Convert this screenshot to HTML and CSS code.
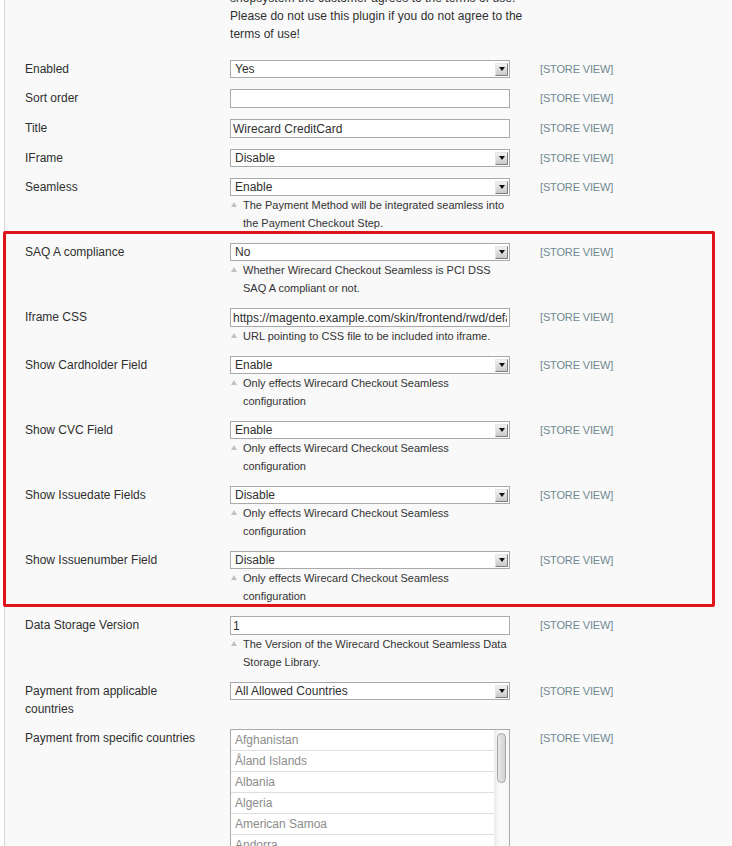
FILE: index.html
```html
<!DOCTYPE html>
<html>
<head>
<meta charset="utf-8">
<link rel="stylesheet" href="styles.css">
</head>
<body>
<div class="panel">
  <div class="row row-comment">
    <div class="label"></div>
    <div class="value"><p class="comment">shopsystem the customer agrees to the terms of use.<br>Please do not use this plugin if you do not agree to the<br>terms of use!</p></div>
    <div class="scope"></div>
  </div>

  <div class="row">
    <div class="label">Enabled</div>
    <div class="value"><div class="select"><span>Yes</span><span class="select-btn"></span></div></div>
    <div class="scope">[STORE VIEW]</div>
  </div>

  <div class="row">
    <div class="label">Sort order</div>
    <div class="value"><input class="input" type="text" value=""></div>
    <div class="scope">[STORE VIEW]</div>
  </div>

  <div class="row">
    <div class="label">Title</div>
    <div class="value"><input class="input" type="text" value="Wirecard CreditCard"></div>
    <div class="scope">[STORE VIEW]</div>
  </div>

  <div class="row">
    <div class="label">IFrame</div>
    <div class="value"><div class="select"><span>Disable</span><span class="select-btn"></span></div></div>
    <div class="scope">[STORE VIEW]</div>
  </div>

  <div class="row">
    <div class="label">Seamless</div>
    <div class="value">
      <div class="select"><span>Enable</span><span class="select-btn"></span></div>
      <p class="note"><span>The Payment Method will be integrated seamless into the Payment Checkout Step.</span></p>
    </div>
    <div class="scope">[STORE VIEW]</div>
  </div>

  <div class="row">
    <div class="label">SAQ A compliance</div>
    <div class="value">
      <div class="select"><span>No</span><span class="select-btn"></span></div>
      <p class="note"><span>Whether Wirecard Checkout Seamless is PCI DSS SAQ A compliant or not.</span></p>
    </div>
    <div class="scope">[STORE VIEW]</div>
  </div>

  <div class="row">
    <div class="label">Iframe CSS</div>
    <div class="value">
      <input class="input" type="text" value="https://magento.example.com/skin/frontend/rwd/default/css/wirecard.css">
      <p class="note"><span>URL pointing to CSS file to be included into iframe.</span></p>
    </div>
    <div class="scope">[STORE VIEW]</div>
  </div>

  <div class="row">
    <div class="label">Show Cardholder Field</div>
    <div class="value">
      <div class="select"><span>Enable</span><span class="select-btn"></span></div>
      <p class="note"><span>Only effects Wirecard Checkout Seamless configuration</span></p>
    </div>
    <div class="scope">[STORE VIEW]</div>
  </div>

  <div class="row">
    <div class="label">Show CVC Field</div>
    <div class="value">
      <div class="select"><span>Enable</span><span class="select-btn"></span></div>
      <p class="note"><span>Only effects Wirecard Checkout Seamless configuration</span></p>
    </div>
    <div class="scope">[STORE VIEW]</div>
  </div>

  <div class="row">
    <div class="label">Show Issuedate Fields</div>
    <div class="value">
      <div class="select"><span>Disable</span><span class="select-btn"></span></div>
      <p class="note"><span>Only effects Wirecard Checkout Seamless configuration</span></p>
    </div>
    <div class="scope">[STORE VIEW]</div>
  </div>

  <div class="row">
    <div class="label">Show Issuenumber Field</div>
    <div class="value">
      <div class="select"><span>Disable</span><span class="select-btn"></span></div>
      <p class="note"><span>Only effects Wirecard Checkout Seamless configuration</span></p>
    </div>
    <div class="scope">[STORE VIEW]</div>
  </div>

  <div class="row">
    <div class="label">Data Storage Version</div>
    <div class="value">
      <input class="input" type="text" value="1">
      <p class="note"><span>The Version of the Wirecard Checkout Seamless Data Storage Library.</span></p>
    </div>
    <div class="scope">[STORE VIEW]</div>
  </div>

  <div class="row">
    <div class="label">Payment from applicable countries</div>
    <div class="value"><div class="select"><span>All Allowed Countries</span><span class="select-btn"></span></div></div>
    <div class="scope">[STORE VIEW]</div>
  </div>

  <div class="row">
    <div class="label">Payment from specific countries</div>
    <div class="value">
      <div class="multi">
        <div class="multi-list">
          <div class="opt">Afghanistan</div>
          <div class="opt">Åland Islands</div>
          <div class="opt">Albania</div>
          <div class="opt">Algeria</div>
          <div class="opt">American Samoa</div>
          <div class="opt">Andorra</div>
          <div class="opt">Angola</div>
        </div>
        <div class="multi-bar"><div class="multi-thumb"></div></div>
      </div>
    </div>
    <div class="scope">[STORE VIEW]</div>
  </div>
</div>
<div class="highlight"></div>
</body>
</html>
```

FILE: styles.css
```css
html, body {
  margin: 0;
  padding: 0;
}
body {
  background: #ffffff;
  font-family: "Liberation Sans", Arial, sans-serif;
  font-size: 12px;
  color: #2f2f2f;
  overflow: hidden;
  height: 846px;
}
.panel {
  margin-left: 4px;
  border-left: 1px solid #d6d6d6;
  background: #f9f9f9;
  padding-left: 20px;
  min-height: 900px;
}
.row {
  display: grid;
  grid-template-columns: 205px 280px 1fr;
  padding: 5px 0 6px;
  line-height: 18px;
}
.row-comment {
  margin-top: -16px;
  padding-bottom: 12px;
}
.label {
  padding-right: 25px;
}
.scope {
  padding-left: 30px;
  font-size: 11px;
  letter-spacing: -0.15px;
  color: #6f8992;
}
.comment {
  margin: 0;
  white-space: nowrap;
  line-height: 18px;
  letter-spacing: 0.05px;
}
.select {
  box-sizing: border-box;
  height: 18px;
  border: 1px solid #aaaaaa;
  background: #ffffff;
  display: flex;
  align-items: center;
  justify-content: space-between;
  padding: 0 1px 0 4px;
  line-height: 16px;
}
.select-btn {
  box-sizing: border-box;
  width: 13px;
  height: 13px;
  border: 1px solid;
  border-color: #e6e6e6 #7d7d7d #7d7d7d #e6e6e6;
  background: linear-gradient(#f2f2f2, #c9c9c9);
  display: flex;
  align-items: center;
  justify-content: center;
}
.select-btn::after {
  content: "";
  width: 0;
  height: 0;
  border-left: 3px solid transparent;
  border-right: 3px solid transparent;
  border-top: 4px solid #111111;
}
.input {
  display: block;
  box-sizing: border-box;
  width: 280px;
  height: 19px;
  margin: 0;
  border: 1px solid #aaaaaa;
  padding: 0 2px;
  background: #ffffff;
  font-family: "Liberation Sans", Arial, sans-serif;
  font-size: 12px;
  color: #2f2f2f;
  outline: none;
}
.note {
  display: flex;
  margin: 0;
  font-size: 11px;
  line-height: 18px;
  color: #333333;
}
.note::before {
  content: "";
  flex: none;
  width: 0;
  height: 0;
  border-left: 3px solid transparent;
  border-right: 3px solid transparent;
  border-bottom: 5px solid #c2c2c2;
  margin: 6px 6px 0 1px;
}
.multi {
  box-sizing: border-box;
  width: 280px;
  height: 160px;
  border: 1px solid #aaaaaa;
  background: #ffffff;
  display: flex;
}
.multi-list {
  flex: 1;
}
.opt {
  height: 20px;
  line-height: 20px;
  border-bottom: 1px solid #dedede;
  padding-left: 4px;
  color: #8c8c8c;
}
.multi-bar {
  width: 15px;
  background: linear-gradient(to right, #ebebeb, #fbfbfb 40%, #f7f7f7);
  display: flex;
  justify-content: center;
}
.multi-thumb {
  box-sizing: border-box;
  width: 9px;
  height: 50px;
  margin-top: 3px;
  border: 1px solid #a3a3a3;
  border-radius: 5px;
  background: linear-gradient(to right, #e9e9e9, #d2d2d2);
}
.highlight {
  position: absolute;
  left: 3px;
  top: 231px;
  width: 712px;
  height: 376px;
  box-sizing: border-box;
  border: 3px solid #e0141b;
  border-radius: 2px;
}
```
